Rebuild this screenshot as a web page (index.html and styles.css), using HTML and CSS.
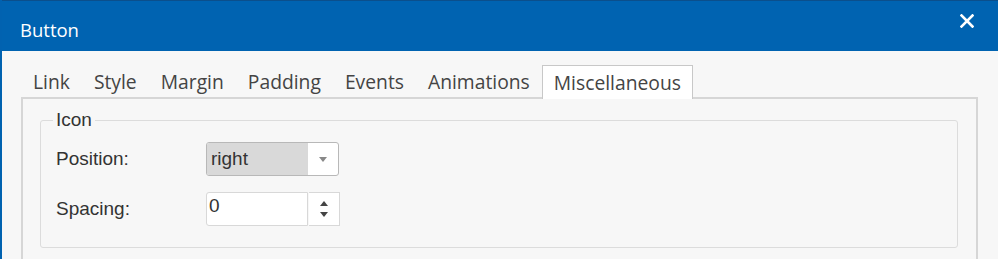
FILE: index.html
```html
<!DOCTYPE html>
<html lang="en">
<head>
    <meta charset="UTF-8">
    <title>Button</title>
    <link rel="stylesheet" href="styles.css">
</head>
<body>
    <div class="window">
        <div class="titlebar">
            <span class="title">Button</span>
            <svg class="close" width="14" height="14" viewBox="0 0 14 14">
                <path d="M1.5 1.5 L12.5 12.5 M12.5 1.5 L1.5 12.5" stroke="#fff" stroke-width="2.6" stroke-linecap="square"/>
            </svg>
        </div>
        <div class="content">
            <div class="tabs">
                <div class="tab">Link</div>
                <div class="tab">Style</div>
                <div class="tab">Margin</div>
                <div class="tab">Padding</div>
                <div class="tab">Events</div>
                <div class="tab">Animations</div>
                <div class="tab active">Miscellaneous</div>
            </div>
            <div class="panel">
                <fieldset class="group">
                    <legend>Icon</legend>
                    <div class="row">
                        <label>Position:</label>
                        <div class="select">
                            <span class="select-value">right</span>
                            <span class="select-arrow"></span>
                        </div>
                    </div>
                    <div class="row">
                        <label>Spacing:</label>
                        <div class="spinner">
                            <div class="spin-input">0</div>
                            <div class="spin-buttons">
                                <span class="up"></span>
                                <span class="down"></span>
                            </div>
                        </div>
                    </div>
                </fieldset>
            </div>
        </div>
    </div>
</body>
</html>
```

FILE: styles.css
```css
body {
    margin: 0;
    background-color: #f7f7f7;
    font-family: "Open Sans", "Noto Sans", sans-serif;
    overflow: hidden;
}
.window {
    border-left: 2px solid #0162b0;
    height: 259px;
}
.titlebar {
    height: 51px;
    background-color: #0063b1;
    border-top: 1px solid #0b4f8c;
    box-sizing: border-box;
    display: flex;
    align-items: center;
    justify-content: space-between;
    padding: 6px 24px 0 18px;
    color: #fff;
}
.title {
    font-size: 18.5px;
}
.close {
    margin-top: -17px;
}

.content {
    padding: 14px 20px 0 19px;
}
.tabs {
    display: flex;
    height: 32px;
}
.tab {
    padding: 0 11px;
    font-size: 19.3px;
    color: #444;
    line-height: 32px;
    border: 1px solid transparent;
    border-bottom: none;
}
.tab.active {
    background-color: #fff;
    border-color: #c8c8c8;
    margin-bottom: -2px;
    position: relative;
    line-height: 33px;
}
.panel {
    border: 2px solid #d6d6d6;
    height: 200px;
    padding: 10px 18px 0 17px;
}

.group {
    margin: 0;
    border: 1px solid #dcdcdc;
    border-radius: 3px;
    padding: 2px 15px 21px 15px;
    font-family: "Liberation Sans", Arial, sans-serif;
    font-size: 19px;
    color: #333;
}
.group legend {
    padding: 0 3px;
    margin-left: -3px;
}
.row {
    display: flex;
    align-items: center;
    height: 34px;
    margin-top: 16px;
}
.row:first-of-type {
    margin-top: 9px;
}
.row label {
    width: 150px;
}
.select {
    width: 133px;
    height: 34px;
    box-sizing: border-box;
    border: 1px solid #b8b8b8;
    border-radius: 3px;
    display: flex;
    overflow: hidden;
    background-color: #fff;
}
.select-value {
    width: 97px;
    background-color: #d9d9d9;
    padding-left: 4px;
    line-height: 32px;
}
.select-arrow {
    flex: 1;
    display: flex;
    justify-content: center;
    align-items: center;
}
.select-arrow::after {
    content: "";
    border-left: 4px solid transparent;
    border-right: 4px solid transparent;
    border-top: 5px solid #888;
}
.spinner {
    display: flex;
    height: 34px;
}
.spin-input {
    width: 102px;
    box-sizing: border-box;
    border: 1px solid #d8d8d8;
    border-radius: 3px 0 0 3px;
    background-color: #fff;
    padding-left: 2px;
    line-height: 26px;
}
.spin-buttons {
    width: 31px;
    box-sizing: border-box;
    border: 1px solid #d8d8d8;
    border-left: none;
    margin-left: 1px;
    background-color: #fff;
    display: flex;
    flex-direction: column;
    align-items: center;
    justify-content: center;
    gap: 6px;
}
.spin-buttons .up {
    border-left: 4px solid transparent;
    border-right: 4px solid transparent;
    border-bottom: 5px solid #444;
}
.spin-buttons .down {
    border-left: 4px solid transparent;
    border-right: 4px solid transparent;
    border-top: 5px solid #444;
}
```
